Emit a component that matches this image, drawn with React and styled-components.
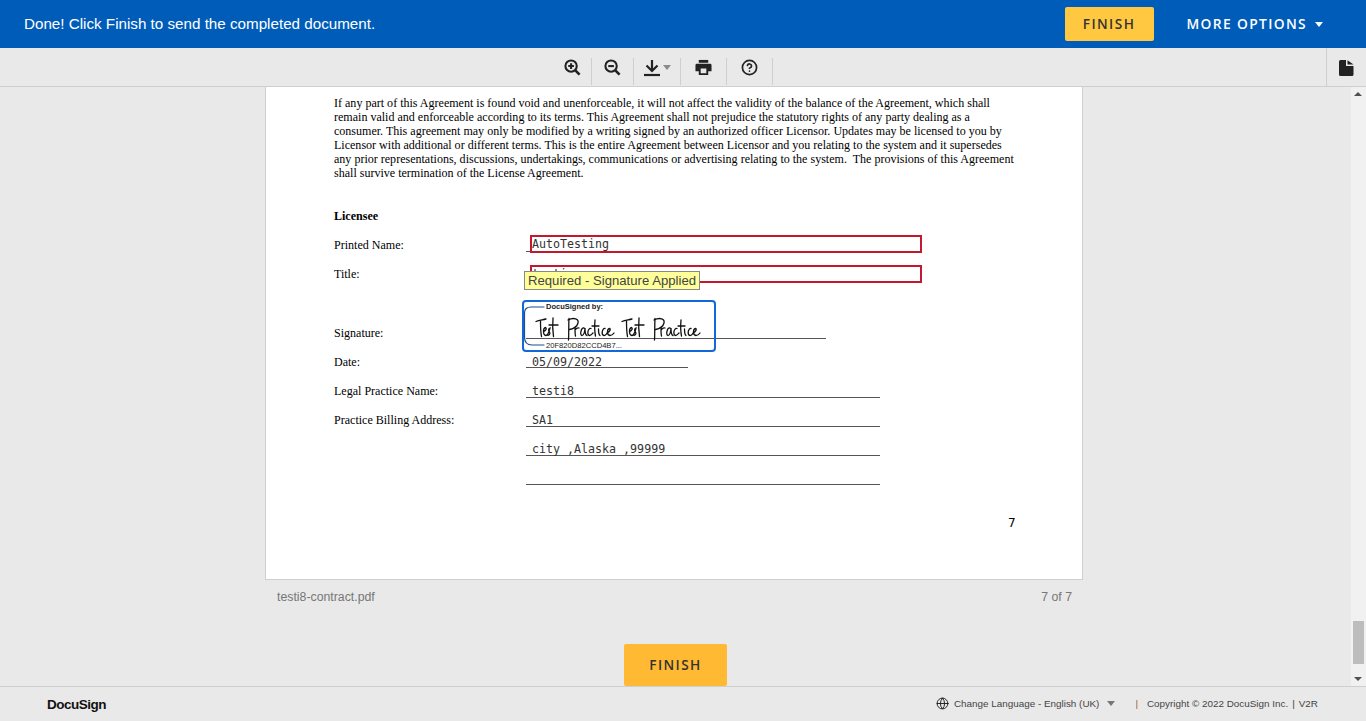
import React from 'react';
import styled, { createGlobalStyle } from 'styled-components';
import { Globe, HelpCircle } from 'lucide-react';

const GlobalStyle = createGlobalStyle`
	html, body {
		margin: 0;
		height: 100%;
		overflow: hidden;
		font-family: 'Liberation Sans', Arial, sans-serif;
		background: #e9e9e9;
	}
`;

const Shell = styled.div`
	width: 1366px;
	height: 721px;
	display: flex;
	flex-direction: column;
	position: relative;
	overflow: hidden;
`;

const Banner = styled.header`
	height: 48px;
	flex: none;
	background: #005cb9;
	display: flex;
	align-items: center;
	padding: 0 43px 0 24px;
	color: #fff;
`;

const BannerText = styled.div`
	flex: 1;
	font-size: 15.2px;
	padding-bottom: 1px;
`;

const FinishButton = styled.button`
	border: 0;
	border-radius: 2px;
	background: ${(p) => p.$bg};
	color: #333;
	font-family: 'Open Sans', sans-serif;
	font-weight: 600;
	font-size: 13.6px;
	letter-spacing: 1.45px;
	padding: 0 0 2px;
	display: block;
`;

const TopFinish = styled(FinishButton)`
	width: 89px;
	height: 34px;
`;

const MoreOptions = styled.div`
	margin-left: 33px;
	font-family: 'Open Sans', sans-serif;
	font-weight: 600;
	font-size: 13.8px;
	letter-spacing: 1.35px;
	padding-bottom: 2px;
	display: flex;
	align-items: center;
	gap: 8px;
`;

const Caret = styled.span`
	width: 0;
	height: 0;
	flex: none;
	margin: ${(p) => p.$top || 0}px 0 0 ${(p) => p.$left || 0}px;
	border-left: ${(p) => p.$size}px solid transparent;
	border-right: ${(p) => p.$size}px solid transparent;
	border-top: ${(p) => p.$size + 1}px solid ${(p) => p.$color};
`;

const Toolbar = styled.div`
	height: 38px;
	flex: none;
	border-bottom: 1px solid #cfcfcf;
	display: flex;
	justify-content: center;
	position: relative;
	padding-right: 40px;
`;

const ToolGroup = styled.div`
	display: flex;
	align-items: flex-start;
	padding-top: 10px;
`;

const ToolItem = styled.div`
	width: ${(p) => p.$w}px;
	height: 27px;
	border-right: 1px solid #cfcfcf;
	display: flex;
	align-items: flex-start;
	justify-content: center;
	padding-top: 1px;
	box-sizing: border-box;
	gap: 2px;
	color: #222;
`;

const PagesTab = styled.div`
	position: absolute;
	right: 0;
	top: 0;
	bottom: -1px;
	width: 39px;
	border-left: 1px solid #cfcfcf;
	display: flex;
	align-items: center;
	justify-content: center;
`;

const Scroller = styled.main`
	flex: 1;
	min-height: 0;
	display: flex;
	position: relative;
`;

const Canvas = styled.div`
	flex: 1;
	display: flex;
	flex-direction: column;
	align-items: flex-start;
	padding-left: 265px;
`;

const Page = styled.section`
	position: relative;
	width: 816px;
	height: 492px;
	background: #fff;
	border: 1px solid #cfcfcf;
	border-top: 0;
	color: #000;
	font-family: 'Liberation Serif', 'Times New Roman', serif;
	font-size: 12.04px;
`;

const Clause = styled.p`
	margin: 0;
	padding: 10px 0 0 68px;
	line-height: 13.9px;
	white-space: pre;
`;

const Heading = styled.div`
	font-weight: 700;
	margin: 29px 0 0 68px;
	line-height: 14px;
`;

const FormRows = styled.div`
	margin: 15px 0 0 68px;
`;

const FormRow = styled.div`
	display: grid;
	grid-template-columns: 192px ${(p) => p.$w}px;
	height: ${(p) => p.$h}px;
	align-items: start;
`;

const RowLabel = styled.div`
	line-height: 14px;
`;

const RowValue = styled.div`
	height: ${(p) => p.$line}px;
	border-bottom: 1px solid #555;
	font-family: 'DejaVu Sans Mono', monospace;
	font-size: 11.65px;
	line-height: 14px;
	color: #333;
	padding-left: 6px;
	white-space: pre;
	overflow: visible;
`;

const PageNumber = styled.div`
	position: absolute;
	left: 742px;
	top: 429px;
	font-family: 'DejaVu Sans', sans-serif;
	font-size: 12px;
`;

const RequiredField = styled.div`
	position: absolute;
	left: 264px;
	top: ${(p) => p.$top}px;
	width: 392px;
	height: 18px;
	box-sizing: border-box;
	border: 2px solid #c4182f;
	overflow: hidden;
	font-family: 'DejaVu Sans Mono', monospace;
	font-size: 11.65px;
	line-height: 14px;
	color: #333;
	white-space: pre;
`;

const Tip = styled.div`
	position: absolute;
	left: 258px;
	top: 184px;
	height: 19px;
	box-sizing: border-box;
	padding: 0 3px;
	background: #ffff99;
	border: 1px solid #888;
	font-family: 'Liberation Sans', sans-serif;
	font-size: 13.15px;
	line-height: 17px;
	color: #444;
	white-space: nowrap;
`;

const SignatureBox = styled.div`
	position: absolute;
	left: 256px;
	top: 213px;
	width: 194px;
	height: 52px;
	box-sizing: border-box;
	border: 2px solid #1268d8;
	border-radius: 4px;
`;

const SignatureSvg = styled.svg`
	position: absolute;
	left: -2px;
	top: -2px;
`;

const SigLabel = styled.div`
	position: absolute;
	left: ${(p) => p.$left}px;
	top: ${(p) => p.$top}px;
	font-family: 'Liberation Sans', sans-serif;
	font-size: ${(p) => p.$size}px;
	font-weight: ${(p) => p.$weight};
	color: #222;
	line-height: 9px;
	white-space: nowrap;
`;

const Caption = styled.div`
	width: 818px;
	box-sizing: border-box;
	display: flex;
	justify-content: space-between;
	padding: 10px 11px 0 12px;
	font-size: 12.3px;
	line-height: 15px;
	color: #777;
`;

const BottomFinish = styled(FinishButton)`
	position: absolute;
	left: 624px;
	top: 557px;
	width: 103px;
	height: 42px;
`;

const ScrollTrack = styled.div`
	position: absolute;
	right: 0;
	top: 0;
	bottom: 0;
	width: 15px;
	background: #f1f1f1;
`;

const ScrollArrow = styled.div`
	position: absolute;
	left: 3px;
	${(p) => (p.$up ? 'top: 5px;' : 'bottom: 5px;')}
	width: 0;
	height: 0;
	border-left: 4px solid transparent;
	border-right: 4px solid transparent;
	${(p) => (p.$up ? 'border-bottom: 4px solid #505050;' : 'border-top: 4px solid #505050;')}
`;

const ScrollThumb = styled.div`
	position: absolute;
	left: 2px;
	top: 534px;
	width: 11px;
	height: 43px;
	background: #bdbdbd;
`;

const Footer = styled.footer`
	height: 35px;
	flex: none;
	box-sizing: border-box;
	border-top: 1px solid #cfcfcf;
	display: flex;
	align-items: center;
	padding: 0 48px 2px 47px;
	font-size: 9.9px;
	color: #444;
`;

const Logo = styled.div`
	flex: 1;
	font-weight: 700;
	font-size: 13.5px;
	letter-spacing: -0.5px;
	color: #111;
	padding-top: 2px;
`;

const FooterItem = styled.div`
	display: flex;
	align-items: center;
	gap: ${(p) => p.$gap || 0}px;
	white-space: nowrap;
`;

const Pipe = styled.span`
	color: ${(p) => p.$color || '#444'};
	margin: 0 ${(p) => p.$right}px 0 ${(p) => p.$left}px;
`;

const clause = `If any part of this Agreement is found void and unenforceable, it will not affect the validity of the balance of the Agreement, which shall
remain valid and enforceable according to its terms. This Agreement shall not prejudice the statutory rights of any party dealing as a
consumer. This agreement may only be modified by a writing signed by an authorized officer Licensor. Updates may be licensed to you by
Licensor with additional or different terms. This is the entire Agreement between Licensor and you relating to the system and it supersedes
any prior representations, discussions, undertakings, communications or advertising relating to the system.  The provisions of this Agreement
shall survive termination of the License Agreement.`;

// rows of the licensee block, heights follow the pdf baselines
const rows = [
	{ label: 'Printed Name:', h: 29, w: 5, line: 13 },
	{ label: 'Title:', h: 59, w: 0 },
	{ label: 'Signature:', h: 29, w: 300, line: 12, value: '' },
	{ label: 'Date:', h: 29, w: 162, line: 12, value: '05/09/2022' },
	{ label: 'Legal Practice Name:', h: 29, w: 354, line: 13, value: 'testi8' },
	{ label: 'Practice Billing Address:', h: 29, w: 354, line: 13, value: 'SA1' },
	{ label: '', h: 29, w: 354, line: 13, value: 'city ,Alaska ,99999' },
	{ label: '', h: 14, w: 354, line: 13, value: '' },
];

const ZoomIcon = ({ plus }) => (
	<svg width='17' height='17' viewBox='0 0 18 18' fill='none' stroke='#222' strokeWidth='2.2'>
		<circle cx='7.5' cy='7.5' r='6' />
		<path d='M12 12l4.5 4.5' strokeWidth='2.8' />
		<path d={plus ? 'M4.5 7.5h6M7.5 4.5v6' : 'M4.5 7.5h6'} />
	</svg>
);

const DownloadIcon = () => (
	<svg width='18' height='18' viewBox='0 0 18 18' fill='none' stroke='#222' strokeWidth='2.2'>
		<path d='M9 1v10.500M3.500 6.500L9 12l5.500-5.500' />
		<path d='M1 16h16' />
	</svg>
);

const PrintIcon = () => (
	<svg width='17' height='17' viewBox='0 0 18 18' fill='#222'>
		<path d='M4 1h10v3H4z' />
		<path fillRule='evenodd' d='M2 5h14a1.500 1.500 0 0 1 1.500 1.500V13H14v4H4v-4H.5V6.500A1.500 1.500 0 0 1 2 5zM6 10v5h6v-5z' />
	</svg>
);

const PagesIcon = () => (
	<svg width='15' height='16' viewBox='0 0 15 16' fill='#222'>
		<path d='M1.500 0H7v6h7.500v8.500A1.500 1.500 0 0 1 13 16H1.500A1.500 1.500 0 0 1 0 14.500v-13A1.500 1.500 0 0 1 1.500 0z' />
		<path d='M8.500 0.300L14.500 4.500H8.500z' />
	</svg>
);

// one handwritten "Test Practice", the signature repeats it twice
const sigStrokes = [
	'M14 21.500C17 20 20 20 24 19',
	'M18.500 21C18.500 26 18.500 31 19.500 36.500',
	'M21.500 31.500C24 31 25 28 23.500 27.500C21 28 20.500 35 24 35.500C26 35.500 27 32 28 28C26.500 28.500 26 30.500 27.500 32C28.500 33.500 27.500 36 25 35',
	'M31 18C30.500 24 30.500 30 31.500 36.500M27 25H36',
	'M47 18.500C46.500 26 47 33 46.500 40',
	'M46 20C52 17 57 19 56 23C55 27 50 29 47.500 29.500',
	'M53 28C53 31 53 34 53.500 36M53 30C54.500 28 55.500 27.500 57 28',
	'M62 28C59 27.500 57.500 35 60 35.500C62 35.500 63 31 63 28C63 31 63 35 65 35.500',
	'M69 28.500C66 27.500 64.500 35 67.500 35.500C69 35.500 70 34 71 33',
	'M73 20C72.500 26 72.500 31 73.500 36M70 26H77',
	'M76.500 29C76.500 32 76.500 34.500 78 35.500',
	'M83 28.500C80 28 79 35 82 35.500C83.500 35.500 84 34.500 85 33.500',
	'M85 33C88 32 89 28.500 87.500 28.500C85 29 84.500 35 88 35.500C90 35.500 91 34.500 92 33',
];

const SignatureMark = () => (
	<SignatureSvg width='194' height='52' viewBox='0 0 194 52' fill='none' stroke='#111' strokeWidth='1.3' strokeLinecap='round'>
		<path d='M22 7H9Q2.500 7 2.500 13V37Q2.500 45 10 45H22' stroke='#1d4f91' strokeWidth='1.2' />
		{sigStrokes.map((d, i) => (
			<path key={i} d={d} />
		))}
		<g transform='translate(86 0)'>
			{sigStrokes.map((d, i) => (
				<path key={i} d={d} />
			))}
		</g>
	</SignatureSvg>
);

const App = () => (
	<Shell>
		<GlobalStyle />
		<Banner>
			<BannerText>Done! Click Finish to send the completed document.</BannerText>
			<TopFinish $bg='#ffc840'>FINISH</TopFinish>
			<MoreOptions>
				MORE OPTIONS
				<Caret $size={4} $color='#fff' $top={2} />
			</MoreOptions>
		</Banner>
		<Toolbar>
			<ToolGroup>
				<ToolItem $w={38}>
					<ZoomIcon plus />
				</ToolItem>
				<ToolItem $w={42}>
					<ZoomIcon />
				</ToolItem>
				<ToolItem $w={47}>
					<DownloadIcon />
					<Caret $size={4} $color='#8a8a8a' $top={6} />
				</ToolItem>
				<ToolItem $w={46}>
					<PrintIcon />
				</ToolItem>
				<ToolItem $w={46}>
					<HelpCircle size={17} strokeWidth={2.4} />
				</ToolItem>
			</ToolGroup>
			<PagesTab>
				<PagesIcon />
			</PagesTab>
		</Toolbar>
		<Scroller>
			<Canvas>
				<Page>
					<Clause>{clause}</Clause>
					<Heading>Licensee</Heading>
					<FormRows>
						{rows.map((r, i) => (
							<FormRow key={i} $w={r.w} $h={r.h}>
								<RowLabel>{r.label}</RowLabel>
								{r.w > 0 && <RowValue $line={r.line}>{r.value}</RowValue>}
							</FormRow>
						))}
					</FormRows>
					<RequiredField $top={148}>AutoTesting</RequiredField>
					<RequiredField $top={178}>testing</RequiredField>
					<Tip>Required - Signature Applied</Tip>
					<SignatureBox>
						<SignatureMark />
						<SigLabel $left={22} $top={0} $size={7.5} $weight={700}>DocuSigned by:</SigLabel>
						<SigLabel $left={22} $top={39} $size={7.6} $weight={400}>20F820D82CCD4B7...</SigLabel>
					</SignatureBox>
					<PageNumber>7</PageNumber>
				</Page>
				<Caption>
					<span>testi8-contract.pdf</span>
					<span>7 of 7</span>
				</Caption>
			</Canvas>
			<ScrollTrack>
				<ScrollArrow $up />
				<ScrollThumb />
				<ScrollArrow />
			</ScrollTrack>
			<BottomFinish $bg='#ffb932'>FINISH</BottomFinish>
		</Scroller>
		<Footer>
			<Logo>DocuSign</Logo>
			<FooterItem $gap={5}>
				<Globe size={13} strokeWidth={1.8} color='#222' />
				Change Language - English (UK)
				<Caret $size={4} $color='#777' $left={3} />
			</FooterItem>
			<Pipe $left={20} $right={9} $color='#a0651e'>|</Pipe>
			<FooterItem>Copyright © 2022 DocuSign Inc.</FooterItem>
			<Pipe $left={4} $right={4}>|</Pipe>
			<FooterItem>V2R</FooterItem>
		</Footer>
	</Shell>
);

export default App;
